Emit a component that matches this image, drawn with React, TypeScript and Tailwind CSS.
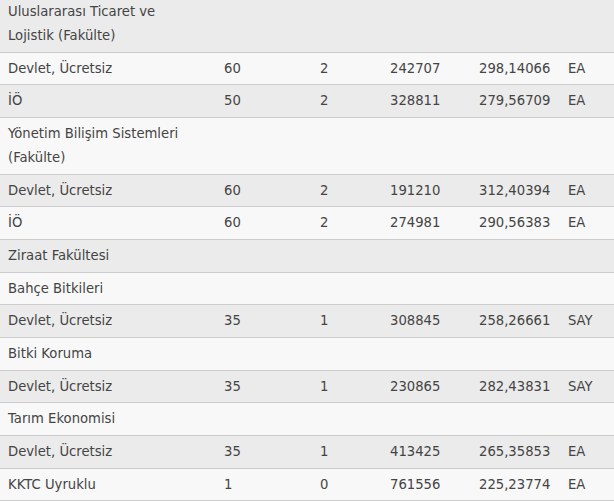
import React from "react";

type Row = { label: string; cells?: string[] };

const rows: Row[] = [
  { label: "Uluslararası Ticaret ve Lojistik (Fakülte)" },
  { label: "Devlet, Ücretsiz", cells: ["60", "2", "242707", "298,14066", "EA"] },
  { label: "İÖ", cells: ["50", "2", "328811", "279,56709", "EA"] },
  { label: "Yönetim Bilişim Sistemleri (Fakülte)" },
  { label: "Devlet, Ücretsiz", cells: ["60", "2", "191210", "312,40394", "EA"] },
  { label: "İÖ", cells: ["60", "2", "274981", "290,56383", "EA"] },
  { label: "Ziraat Fakültesi" },
  { label: "Bahçe Bitkileri" },
  { label: "Devlet, Ücretsiz", cells: ["35", "1", "308845", "258,26661", "SAY"] },
  { label: "Bitki Koruma" },
  { label: "Devlet, Ücretsiz", cells: ["35", "1", "230865", "282,43831", "SAY"] },
  { label: "Tarım Ekonomisi" },
  { label: "Devlet, Ücretsiz", cells: ["35", "1", "413425", "265,35853", "EA"] },
  { label: "KKTC Uyruklu", cells: ["1", "0", "761556", "225,23774", "EA"] },
];

export default function App() {
  return (
    <div
      className="w-[614px] h-[501px] overflow-hidden bg-[#f7f7f7] text-[#444] text-[13.2px] leading-[24px]"
      style={{ fontFamily: '"DejaVu Sans", Verdana, sans-serif' }}
    >
      <table className="w-[614px] table-fixed border-collapse -mt-[4px]">
        <colgroup>
          <col className="w-[216px]" />
          <col className="w-[96px]" />
          <col className="w-[70px]" />
          <col className="w-[89px]" />
          <col className="w-[89px]" />
          <col className="w-[54px]" />
        </colgroup>
        <tbody>
          {rows.map((r, i) => (
            <tr
              key={i}
              className={
                (i % 2 === 0 ? "bg-[#ebebeb]" : "bg-[#f8f8f8]") +
                " border-b border-[#cccccc]"
              }
            >
              <td className="pl-[8px] pr-[22px] pt-[4px] pb-[3.67px] align-top">
                {r.label}
              </td>
              {(r.cells ?? ["", "", "", "", ""]).map((c, j) => (
                <td key={j} className="pl-[8px] pt-[4px] pb-[3.67px] align-top whitespace-nowrap">
                  {c}
                </td>
              ))}
            </tr>
          ))}
        </tbody>
      </table>
    </div>
  );
}
